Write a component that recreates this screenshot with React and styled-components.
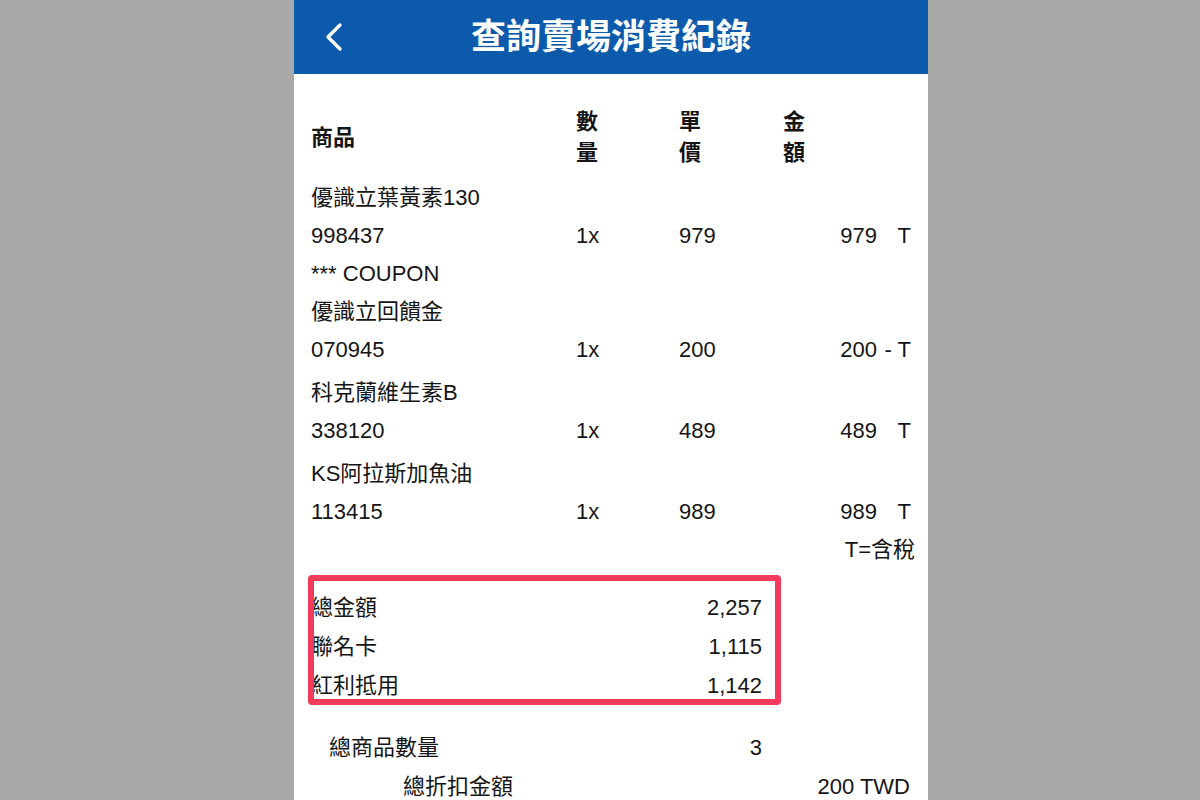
import React from 'react';
import styled, {createGlobalStyle} from 'styled-components';

const GlobalStyle = createGlobalStyle`
  html, body {
    margin: 0;
    padding: 0;
    background: #a9aaa8;
    overflow: hidden;
  }
  body {
    font-family: "Liberation Sans", "Noto Sans CJK TC", sans-serif;
    color: #151515;
  }
`;

const Page = styled.div`
  height: 800px;
  padding-left: 294px;
  overflow: hidden;
`;

const Panel = styled.div`
  width: 634px;
  min-height: 100%;
  background: #fff;
`;

const TopBar = styled.header`
  height: 74px;
  background: #0b5aab;
  display: grid;
  grid-template-columns: 1fr auto 1fr;
  align-items: center;
`;

const BackButton = styled.button`
  justify-self: start;
  margin-left: 29px;
  width: 22px;
  height: 32px;
  padding: 0;
  border: 0;
  background: none;
  display: flex;
  align-items: center;
  justify-content: center;
  cursor: pointer;
`;

const Title = styled.h1`
  margin: 0;
  font-size: 35px;
  font-weight: 700;
  color: #fff;
  line-height: 1;
  padding-bottom: 2px;
`;

const Content = styled.main`
  padding: 32px 17px 0;
  font-size: 22px;
`;

const Grid = styled.div`
  display: grid;
  grid-template-columns: 265px 103px 104px 94px 34px;
  align-items: center;
`;

const HeadRow = styled(Grid)`
  font-weight: 700;
  line-height: 31px;
  margin-bottom: 11px;
`;

const HeadCell = styled.div`
  width: 1em;
  word-break: break-all;
`;

const Line = styled.div`
  line-height: 38px;
  white-space: nowrap;
`;

const ItemRow = styled(Grid)`
  line-height: 38px;
`;

const Amount = styled.div`
  text-align: right;
`;

const Flag = styled.div`
  text-align: right;
  white-space: pre;
`;

const Item = styled.div`
  margin-top: ${p => p.$gap}px;
`;

const TaxNote = styled.div`
  line-height: 38px;
  text-align: right;
  margin-right: -4px;
`;

const Summary = styled.div`
  position: relative;
  width: 451px;
  margin-top: 19px;
  &::after {
    content: '';
    position: absolute;
    top: -13px;
    left: -3px;
    right: -19px;
    bottom: 0;
    border: 6px solid #f43a5b;
    border-radius: 4px;
    pointer-events: none;
  }
`;

const SumRow = styled.div`
  display: flex;
  justify-content: space-between;
  line-height: 39px;
  margin-top: ${p => p.$top || 0}px;
  margin-left: ${p => p.$indent || 0}px;
  width: ${p => p.$width}px;
`;

const items = [
  {name: '優識立葉黃素130', code: '998437', qty: '1x', price: '979', amount: '979', flag: 'T', gap: 0},
  {pre: '*** COUPON', name: '優識立回饋金', code: '070945', qty: '1x', price: '200', amount: '200', flag: ' - T', gap: 0},
  {name: '科克蘭維生素B', code: '338120', qty: '1x', price: '489', amount: '489', flag: 'T', gap: 5},
  {name: 'KS阿拉斯加魚油', code: '113415', qty: '1x', price: '989', amount: '989', flag: 'T', gap: 5},
];

const totals = [
  {label: '總金額', value: '2,257'},
  {label: '聯名卡', value: '1,115'},
  {label: '紅利抵用', value: '1,142'},
];

const App = () => {
  return (
    <>
      <GlobalStyle />
      <Page>
        <Panel>
          <TopBar>
            <BackButton aria-label="返回">
              <svg width="20" height="32" viewBox="0 0 20 32">
                <polyline points="16,4 4,16 16,28" fill="none" stroke="#fff" strokeWidth="3.4" strokeLinecap="round" strokeLinejoin="round" />
              </svg>
            </BackButton>
            <Title>查詢賣場消費紀錄</Title>
            <span />
          </TopBar>
          <Content>
            <HeadRow>
              <div>商品</div>
              <HeadCell>數量</HeadCell>
              <HeadCell>單價</HeadCell>
              <HeadCell>金額</HeadCell>
              <div />
            </HeadRow>
            {items.map(it => (
              <Item key={it.code} $gap={it.gap}>
                {it.pre && <Line>{it.pre}</Line>}
                <Line>{it.name}</Line>
                <ItemRow>
                  <div>{it.code}</div>
                  <div>{it.qty}</div>
                  <div>{it.price}</div>
                  <Amount>{it.amount}</Amount>
                  <Flag>{it.flag}</Flag>
                </ItemRow>
              </Item>
            ))}
            <TaxNote>T=含稅</TaxNote>
            <Summary>
              {totals.map(t => (
                <SumRow key={t.label} $width={451}>
                  <span>{t.label}</span>
                  <span>{t.value}</span>
                </SumRow>
              ))}
            </Summary>
            <SumRow $top={23} $indent={18} $width={433}>
              <span>總商品數量</span>
              <span>3</span>
            </SumRow>
            <SumRow $indent={92} $width={507}>
              <span>總折扣金額</span>
              <span>200 TWD</span>
            </SumRow>
          </Content>
        </Panel>
      </Page>
    </>
  );
};

export default App;
